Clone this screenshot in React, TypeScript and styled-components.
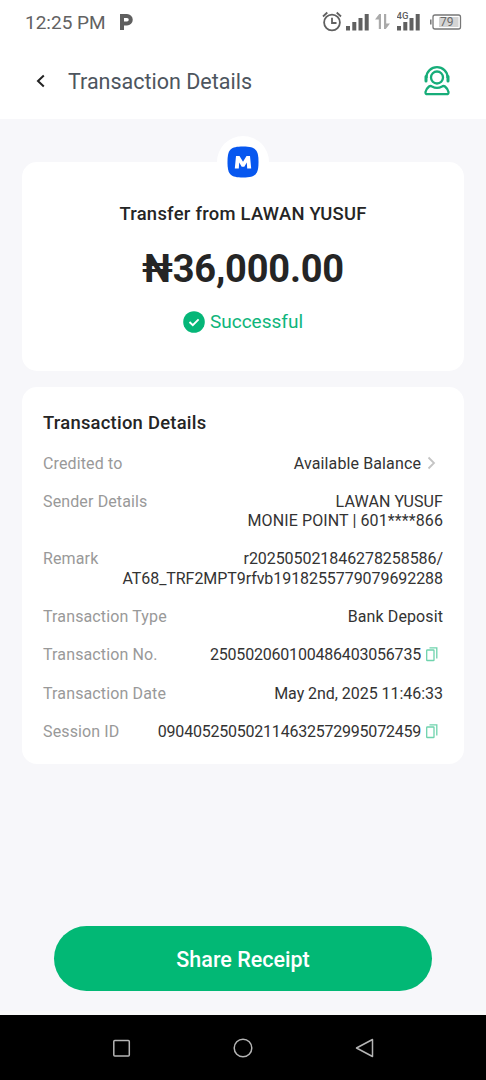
import React from "react";
import styled, { createGlobalStyle } from "styled-components";

const GlobalStyle = createGlobalStyle`
  * { box-sizing: border-box; }
  body { margin: 0; background: #f7f7fa; font-family: Roboto, "Liberation Sans", sans-serif; }
`;

const Screen = styled.div`
  display: flex;
  flex-direction: column;
  width: 486px;
  height: 1080px;
  background: #f7f7fa;
  overflow: hidden;
`;

const StatusBar = styled.header`
  display: flex;
  align-items: center;
  height: 44px;
  padding: 0 24px 0 25px;
  background: #fff;
  color: #626262;
`;

const Clock = styled.span`
  width: 94px;
  font-size: 19px;
  line-height: 22px;
  padding-top: 1px;
`;

const StatusIcons = styled.div`
  display: flex;
  align-items: center;
  margin-left: auto;
`;

const TopBar = styled.nav`
  display: flex;
  align-items: center;
  height: 75px;
  padding: 0 35px 1px;
  background: #fff;
`;

const BackIcon = styled.svg`
  margin-right: 22px;
`;

const PageTitle = styled.h1`
  flex: 1;
  margin: 0;
  padding-top: 1px;
  font-size: 21.5px;
  font-weight: 400;
  line-height: 26px;
  color: #4d555e;
`;

const Content = styled.main`
  display: flex;
  flex-direction: column;
  gap: 16px;
  flex: 1;
  padding: 43px 22px 0;
`;

const Card = styled.section`
  display: flex;
  flex-direction: column;
  background: #fff;
  border-radius: 15px;
`;

const SummaryCard = styled(Card)`
  position: relative;
  align-items: center;
  height: 209px;
  padding-top: 41px;
`;

const BankBadge = styled.div`
  position: absolute;
  top: -26px;
  left: 195px;
  display: flex;
  align-items: center;
  justify-content: center;
  width: 52px;
  height: 52px;
  border-radius: 50%;
  background: #fff;
`;

const TransferFrom = styled.div`
  font-size: 18.4px;
  font-weight: 500;
  line-height: 22px;
  letter-spacing: 0.27px;
  color: #252525;
`;

const Amount = styled.div`
  margin-top: 21px;
  font-size: 38px;
  font-weight: 700;
  line-height: 46px;
  letter-spacing: -0.2px;
  color: #252525;
`;

const Status = styled.div`
  display: flex;
  align-items: center;
  gap: 5px;
  margin-top: 18px;
  font-size: 19px;
  line-height: 24px;
  color: #0eb57b;
`;

const DetailsCard = styled(Card)`
  height: 377px;
  padding: 25px 21px 0;
`;

const SectionTitle = styled.h2`
  margin: 0 0 19px;
  font-size: 18.4px;
  font-weight: 500;
  line-height: 22px;
  letter-spacing: 0.25px;
  color: #252525;
`;

const Rows = styled.dl`
  display: flex;
  flex-direction: column;
  gap: 19.2px;
  margin: 0;
  padding-top: 0.5px;
  font-size: 16px;
  line-height: 19.2px;
`;

const Row = styled.div`
  display: flex;
  justify-content: space-between;
`;

const Label = styled.dt`
  letter-spacing: 0.13px;
  color: #999;
`;

const Value = styled.dd<{ $tracking: number }>`
  display: flex;
  margin: 0;
  text-align: right;
  white-space: pre-line;
  letter-spacing: ${({ $tracking }) => $tracking}px;
  color: #333;
`;

const ValueIcon = styled.svg`
  flex: none;
  margin: 0 2px 0 4px;
`;

const Footer = styled.footer`
  display: flex;
  justify-content: center;
  padding-bottom: 20px;
  border-bottom: 4px solid #f9f9f9;
`;

const ShareButton = styled.button`
  width: 378px;
  height: 65px;
  padding: 3px 0 0;
  border: 0;
  border-radius: 33px;
  background: #02b875;
  color: #fff;
  font: 500 21.5px/26px Roboto, "Liberation Sans", sans-serif;
`;

const SystemNav = styled.div`
  display: flex;
  align-items: center;
  justify-content: space-between;
  height: 65px;
  padding: 0 111px;
  background: #000;
`;

type Detail = { label: string; value: string; tracking: number; icon?: "chevron" | "copy" };

const details: Detail[] = [
  { label: "Credited to", value: "Available Balance", tracking: 0.12, icon: "chevron" },
  { label: "Sender Details", value: "LAWAN YUSUF\nMONIE POINT | 601****866", tracking: 0.1 },
  { label: "Remark", value: "r202505021846278258586/\nAT68_TRF2MPT9rfvb1918255779079692288", tracking: -0.06 },
  { label: "Transaction Type", value: "Bank Deposit", tracking: 0.1 },
  { label: "Transaction No.", value: "250502060100486403056735", tracking: -0.2, icon: "copy" },
  { label: "Transaction Date", value: "May 2nd, 2025 11:46:33", tracking: -0.04 },
  { label: "Session ID", value: "090405250502114632572995072459", tracking: -0.22, icon: "copy" },
];

const Chevron = () => (
  <ValueIcon width="16" height="18" viewBox="0 0 16 18" fill="none" stroke="#c4c4c4" strokeWidth="1.8">
    <path d="M3.500 3.500L9 9l-5.500 5.500" />
  </ValueIcon>
);

const Copy = () => (
  <ValueIcon width="16" height="18" viewBox="0 0 16 18" fill="none" stroke="#6fd3ad" strokeWidth="1.3">
    <rect x="1.700" y="5" width="7.300" height="10.500" rx="0.6" />
    <path d="M4.500 2.900H11.800V13.500" />
  </ValueIcon>
);

const SignalBars = () => (
  <path d="M0 16h4v4.500H0zM6.300 12h4v8.500h-4zM12.500 8h4v12.500h-4zM18.700 4h4v16.500h-4z" />
);

const StatusGlyphs = () => (
  <StatusIcons>
    <svg width="24" height="24" viewBox="0 0 24 24" fill="none" stroke="#606060" strokeWidth="1.800">
      <circle cx="10" cy="12.500" r="7.900" />
      <path d="M10 7.800V13h4.500M1 6.500l4.300-4M14.700 2.500l4.300 4" />
    </svg>
    <svg width="29" height="24" viewBox="0 0 29 24" fill="#606060">
      <SignalBars />
    </svg>
    <svg width="22" height="24" viewBox="0 0 22 24" fill="#aaa">
      <path d="M0 9.500L4.200 4H6v15H3.800V9.500zM9 4h2.200v9.500H15L10.800 19H9z" />
    </svg>
    <svg width="33" height="24" viewBox="0 0 33 24" fill="#606060">
      <text x="-0.500" y="9" fontFamily="Roboto" fontSize="9.500" fontWeight="500">4G</text>
      <SignalBars />
    </svg>
    <svg width="32" height="24" viewBox="0 0 32 24" fill="none">
      <rect x="3" y="5" width="27.500" height="14" rx="2" stroke="#777" strokeWidth="1.300" />
      <path d="M.8 9.500v5" stroke="#777" strokeWidth="1.500" />
      <rect x="9" y="7" width="19.500" height="10" fill="#d4d4d4" />
      <text x="10" y="16.200" fontFamily="Roboto" fontSize="12" fill="#6a6a6a">79</text>
    </svg>
  </StatusIcons>
);

export default function App() {
  return (
    <>
      <GlobalStyle />
      <Screen>
        <StatusBar>
          <Clock>12:25 PM</Clock>
          <svg width="16" height="18" viewBox="0 0 16 18" fill="none" stroke="#5f5f5f" strokeWidth="4">
            <path d="M3 17V3h5a3.300 3.300 0 0 1 0 7.500H5" />
          </svg>
          <StatusGlyphs />
        </StatusBar>
        <TopBar>
          <BackIcon width="11" height="16" viewBox="0 0 11 16" fill="none" stroke="#222" strokeWidth="2">
            <path d="M8.800 2.500L3 8l5.800 5.500" />
          </BackIcon>
          <PageTitle>Transaction Details</PageTitle>
          <svg width="28" height="32" viewBox="0 0 28 32" fill="none" stroke="#17ad79" strokeWidth="2.300">
            <circle cx="14" cy="12.500" r="6" />
            <path d="M3.500 13v-1a10.500 9.800 0 0 1 21 0v1" />
            <path d="M3 11.500v4.500M25 11.500v4.500" strokeWidth="3" strokeLinecap="round" />
            <path d="M6 21.500q1.500-1 3 0 5 2.800 10 0 1.500-1 3 0 3 2.500 3.500 5.500.3 2.200-2 2.200h-19q-2.300 0-2-2.200.500-3 3.500-5.500z" />
          </svg>
        </TopBar>
        <Content>
          <SummaryCard>
            <BankBadge>
              <svg width="32" height="32" viewBox="0 0 32 32">
                <path d="M16 .5c12.500 0 15.500 3 15.500 15.500S28.500 31.500 16 31.500.5 28.500.5 16 3.500.5 16 .5z" fill="#0757ef" />
                <path d="M7.800 22.500L9 10h3.500l3.500 5.800L19.500 10H23l1.200 12.500h-4l-.4-6-2.500 4.200h-2.600l-2.500-4.200-.4 6z" fill="#fff" />
              </svg>
            </BankBadge>
            <TransferFrom>Transfer from LAWAN YUSUF</TransferFrom>
            <Amount>₦36,000.00</Amount>
            <Status>
              <svg width="22" height="22" viewBox="0 0 22 22" fill="none">
                <circle cx="11" cy="11" r="10.800" fill="#05b678" />
                <path d="M6.500 11l3.300 3.200 5.800-5.800" stroke="#fff" strokeWidth="1.900" />
              </svg>
              Successful
            </Status>
          </SummaryCard>
          <DetailsCard>
            <SectionTitle>Transaction Details</SectionTitle>
            <Rows>
              {details.map(({ label, value, tracking, icon }) => (
                <Row key={label}>
                  <Label>{label}</Label>
                  <Value $tracking={tracking}>
                    {value}
                    {icon === "chevron" && <Chevron />}
                    {icon === "copy" && <Copy />}
                  </Value>
                </Row>
              ))}
            </Rows>
          </DetailsCard>
        </Content>
        <Footer>
          <ShareButton>Share Receipt</ShareButton>
        </Footer>
        <SystemNav>
          <svg width="20" height="20" viewBox="0 0 20 20" fill="none" stroke="#b5b5b5" strokeWidth="1.500">
            <rect x="2.800" y="2.500" width="15.500" height="15.500" rx="1" />
          </svg>
          <svg width="20" height="20" viewBox="0 0 20 20" fill="none" stroke="#b5b5b5" strokeWidth="1.500">
            <circle cx="10" cy="10" r="8.800" />
          </svg>
          <svg width="20" height="20" viewBox="0 0 20 20" fill="none" stroke="#b5b5b5" strokeWidth="1.500" strokeLinejoin="round">
            <path d="M17.500 1.500v17L1.500 10z" />
          </svg>
        </SystemNav>
      </Screen>
    </>
  );
}
